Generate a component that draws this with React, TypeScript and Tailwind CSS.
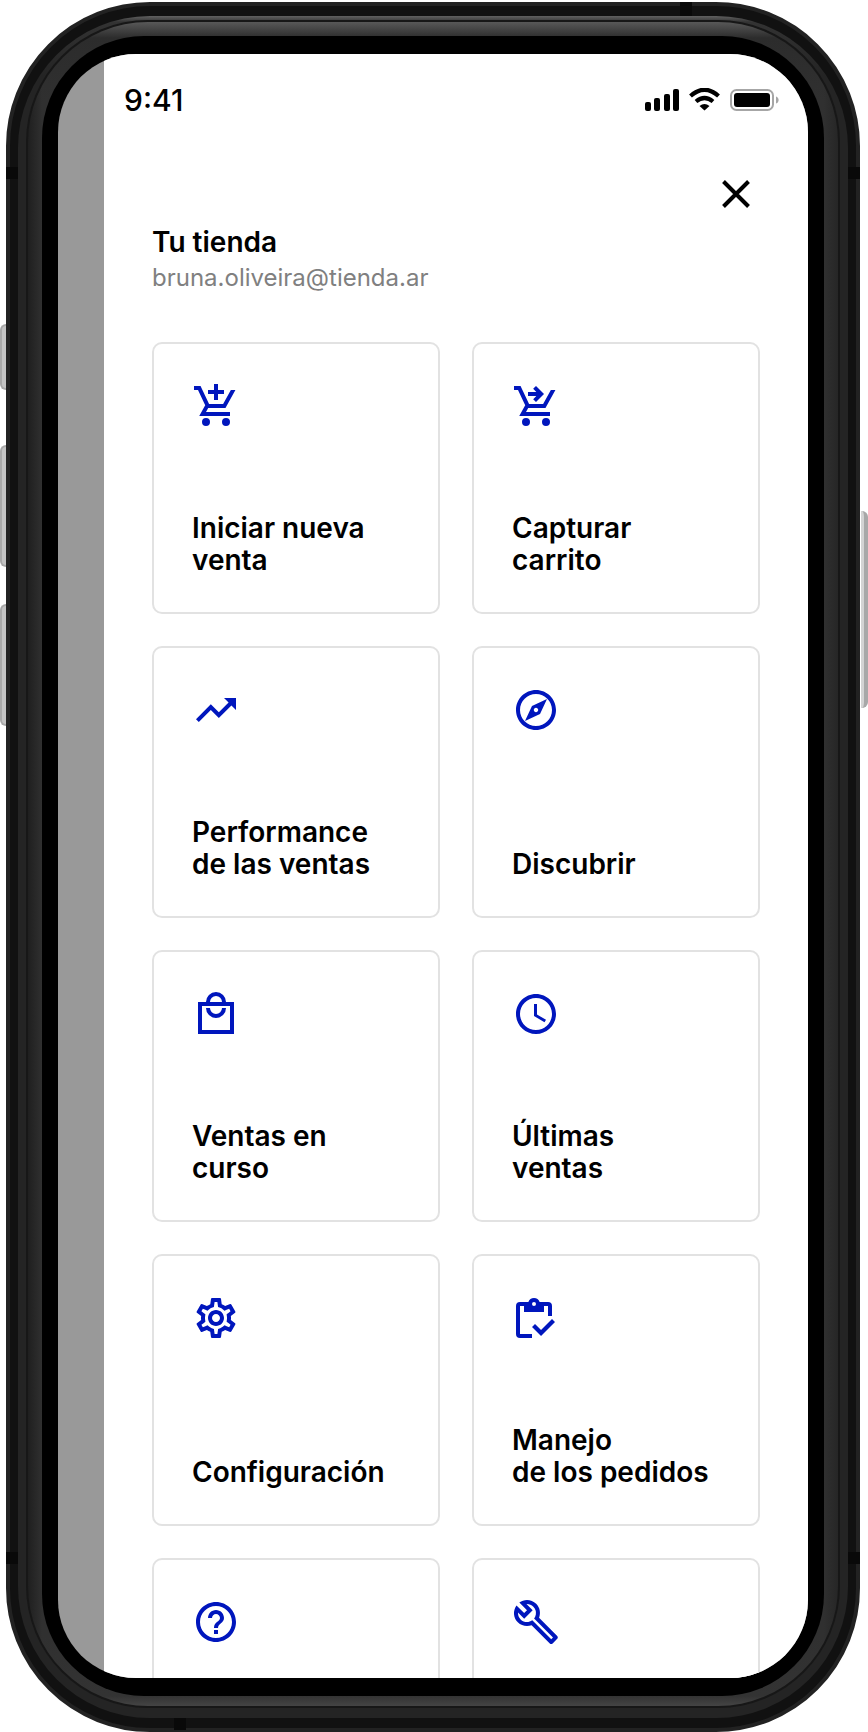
import React from "react";
import {
  MdTrendingUp,
  MdOutlineExplore,
  MdSchedule,
  MdOutlineSettings,
  MdHelpOutline,
  MdOutlineBuild,
} from "react-icons/md";

type IconProps = { className?: string };

const CART =
  "M1 2v2h2l3.6 7.590L3.620 17H19v-2H7l1.100-2h8.640l4.970-9h-2.280l-3.860 7H8.530L4.270 2H1zM7 18a2 2 0 1 0 0 4 2 2 0 0 0 0-4zM17 18a2 2 0 1 0 0 4 2 2 0 0 0 0-4z";

function CartAddIcon({ className }: IconProps) {
  return (
    <svg viewBox="0 0 24 24" fill="currentColor" className={className} aria-hidden="true">
      <path d={CART} />
      <path d="M11 9h2V6h3V4h-3V1h-2v3H8v2h3z" />
    </svg>
  );
}

function CartCheckoutIcon({ className }: IconProps) {
  return (
    <svg viewBox="0 0 24 24" fill="currentColor" className={className} aria-hidden="true">
      <path d={CART} />
      <path d="M8 5h4.170l-1.590-1.590L12 2l4 4-4 4-1.410-1.410L12.170 7H8z" />
    </svg>
  );
}

function MallIcon({ className }: IconProps) {
  return (
    <svg viewBox="0 0 24 24" fill="currentColor" className={className} aria-hidden="true">
      <path
        fillRule="evenodd"
        d="M7 6a5 5 0 0 1 10 0h4v16H3V6h4zm2 0h6a3 3 0 0 0-6 0zM5 8v12h14V8H5zm2 1h2a3 3 0 0 0 6 0h2a5 5 0 0 1-10 0z"
      />
    </svg>
  );
}

function ClipboardCheckIcon({ className }: IconProps) {
  return (
    <svg viewBox="1 -1 24 24" fill="currentColor" className={className} aria-hidden="true">
      <path
        fillRule="evenodd"
        d="M5 5h2v3h10V5h2v5h2V5a2 2 0 0 0-2-2h-4.180a3 3 0 0 0-5.640 0H5a2 2 0 0 0-2 2v14a2 2 0 0 0 2 2h6v-2H5V5zm7-2a1 1 0 1 1 0 2 1 1 0 0 1 0-2z"
      />
      <path d="M21 11.500 15.510 17l-3.010-3L11 15.500l4.510 4.500 6.990-7z" />
    </svg>
  );
}

type Item = { icon: React.ComponentType<IconProps>; lines: string[] };

const items: Item[] = [
  { icon: CartAddIcon, lines: ["Iniciar nueva", "venta"] },
  { icon: CartCheckoutIcon, lines: ["Capturar", "carrito"] },
  { icon: MdTrendingUp, lines: ["Performance", "de las ventas"] },
  { icon: MdOutlineExplore, lines: ["Discubrir"] },
  { icon: MallIcon, lines: ["Ventas en", "curso"] },
  { icon: MdSchedule, lines: ["Últimas", "ventas"] },
  { icon: MdOutlineSettings, lines: ["Configuración"] },
  { icon: ClipboardCheckIcon, lines: ["Manejo", "de los pedidos"] },
  { icon: MdHelpOutline, lines: [] },
  { icon: MdOutlineBuild, lines: [] },
];

function Card({ icon: Icon, lines }: Item) {
  return (
    <button
      type="button"
      className="flex h-[272px] flex-col items-start justify-between rounded-[10px] border-2 border-[#e2e2e2] bg-white px-[38px] pt-[38px] pb-9 text-left text-[28px] leading-8 font-semibold text-black"
    >
      <Icon className="size-12 text-[#0016bd]" />
      <span>
        {lines.map((line) => (
          <span key={line} className="block whitespace-nowrap">
            {line}
          </span>
        ))}
      </span>
    </button>
  );
}

function StatusBar() {
  return (
    <div className="flex h-[92px] items-center justify-between pr-7 pl-5">
      <span className="text-[30px] leading-9 font-medium">9:41</span>
      <svg width="136" height="24" viewBox="0 0 136 24" aria-hidden="true">
        <rect x="1" y="14" width="6" height="9" rx="2" />
        <rect x="10" y="10" width="6" height="13" rx="2" />
        <rect x="20" y="6" width="6" height="17" rx="2" />
        <rect x="29" y="1" width="6" height="22" rx="2" />
        <path
          d="M46.500 8Q60.500-4.500 74.500 8M52 13.500Q60.500 6.500 69 13.500"
          fill="none"
          stroke="#000"
          strokeWidth="4.200"
        />
        <path d="M55.500 18Q60.500 14 65.500 18L60.500 22.500Z" />
        <rect x="87" y="2" width="42" height="20" rx="5.500" fill="none" stroke="#a6a6a6" strokeWidth="2" />
        <rect x="90" y="5" width="36" height="14" rx="3" />
        <path d="M132 8.500c3.500 1 3.500 6 0 7z" fill="#a6a6a6" />
      </svg>
    </div>
  );
}

function AntennaBands() {
  return (
    <div className="pointer-events-none absolute -inset-1 flex flex-col justify-between pb-[2px]" aria-hidden="true">
      <div className="flex flex-col gap-[151px]">
        <span className="mr-[168px] h-[14px] w-3 self-end bg-[#090909]" />
        <div className="flex justify-between">
          <span className="h-3 w-[13px] bg-[#090909]" />
          <span className="h-3 w-[13px] bg-[#090909]" />
        </div>
      </div>
      <div className="flex flex-col gap-[152px]">
        <div className="flex justify-between">
          <span className="h-3 w-[13px] bg-[#090909]" />
          <span className="h-3 w-[13px] bg-[#090909]" />
        </div>
        <span className="ml-[168px] h-[14px] w-3 bg-[#090909]" />
      </div>
    </div>
  );
}

export default function App() {
  return (
    <main className="flex h-screen bg-white font-[Inter,sans-serif] text-black">
      <div className="flex w-[6px] shrink-0 flex-col pt-[324px]" aria-hidden="true">
        <span className="h-[66px] rounded-l-md border-2 border-r-0 border-[#a8a8a8] bg-[#c4c4c4]" />
        <span className="mt-[55px] h-[122px] rounded-l-md border-2 border-r-0 border-[#a8a8a8] bg-[#c4c4c4]" />
        <span className="mt-[37px] h-[122px] rounded-l-md border-2 border-r-0 border-[#a8a8a8] bg-[#c4c4c4]" />
      </div>

      <div className="min-w-0 flex-1 pt-[2px]">
        <div className="relative h-full rounded-[144px] border-4 border-[#222] bg-[#111] px-2 py-[10px]">
          <AntennaBands />
          <div className="relative h-full rounded-[132px] bg-[linear-gradient(to_bottom,#606060,#333_6px,#242424_60px,#242424)] px-2 pt-1 pb-[10px]">
            <div className="h-full rounded-[122px] bg-[#171717] p-[2px]">
              <div className="h-full rounded-[120px] bg-[linear-gradient(to_bottom,#585858,#2c2c2c_16px,transparent_80px),linear-gradient(to_top,#444,#333_10px,transparent_70px),linear-gradient(to_right,#1f1f1f,#303030_14px,#303030_calc(100%-14px),#262626)] px-[14px] pt-[14px] pb-[10px]">
                <div className="h-full rounded-[102px] bg-black px-4 py-[18px]">
                  <div className="flex h-full overflow-hidden rounded-[78px] bg-[#999] pl-[46px]">
                    <div className="flex-1 bg-white">
                      <StatusBar />
                      <div className="px-12">
                        <header>
                          <div className="flex justify-end pt-6 pb-[6px]">
                            <button
                              type="button"
                              aria-label="Cerrar"
                              className="flex size-12 items-center justify-center"
                            >
                              <svg
                                viewBox="0 0 28 28"
                                className="size-7"
                                fill="none"
                                stroke="currentColor"
                                strokeWidth="4"
                              >
                                <path d="M1.500 1.500 26.500 26.500M26.500 1.500 1.500 26.500" />
                              </svg>
                            </button>
                          </div>
                          <h1 className="text-[28px] leading-9 font-semibold">Tu tienda</h1>
                          <p className="text-2xl leading-9 text-[#808080]">bruna.oliveira@tienda.ar</p>
                        </header>
                        <nav className="mt-[46px] grid grid-cols-2 gap-8">
                          {items.map((item, index) => (
                            <Card key={index} {...item} />
                          ))}
                        </nav>
                      </div>
                    </div>
                  </div>
                </div>
              </div>
            </div>
          </div>
        </div>
      </div>

      <div className="flex w-2 shrink-0 flex-col pt-[511px] pl-px" aria-hidden="true">
        <span className="h-[197px] rounded-r-md border-r-4 border-[#a8a8a8] bg-[#d4d4d4]" />
      </div>
    </main>
  );
}
